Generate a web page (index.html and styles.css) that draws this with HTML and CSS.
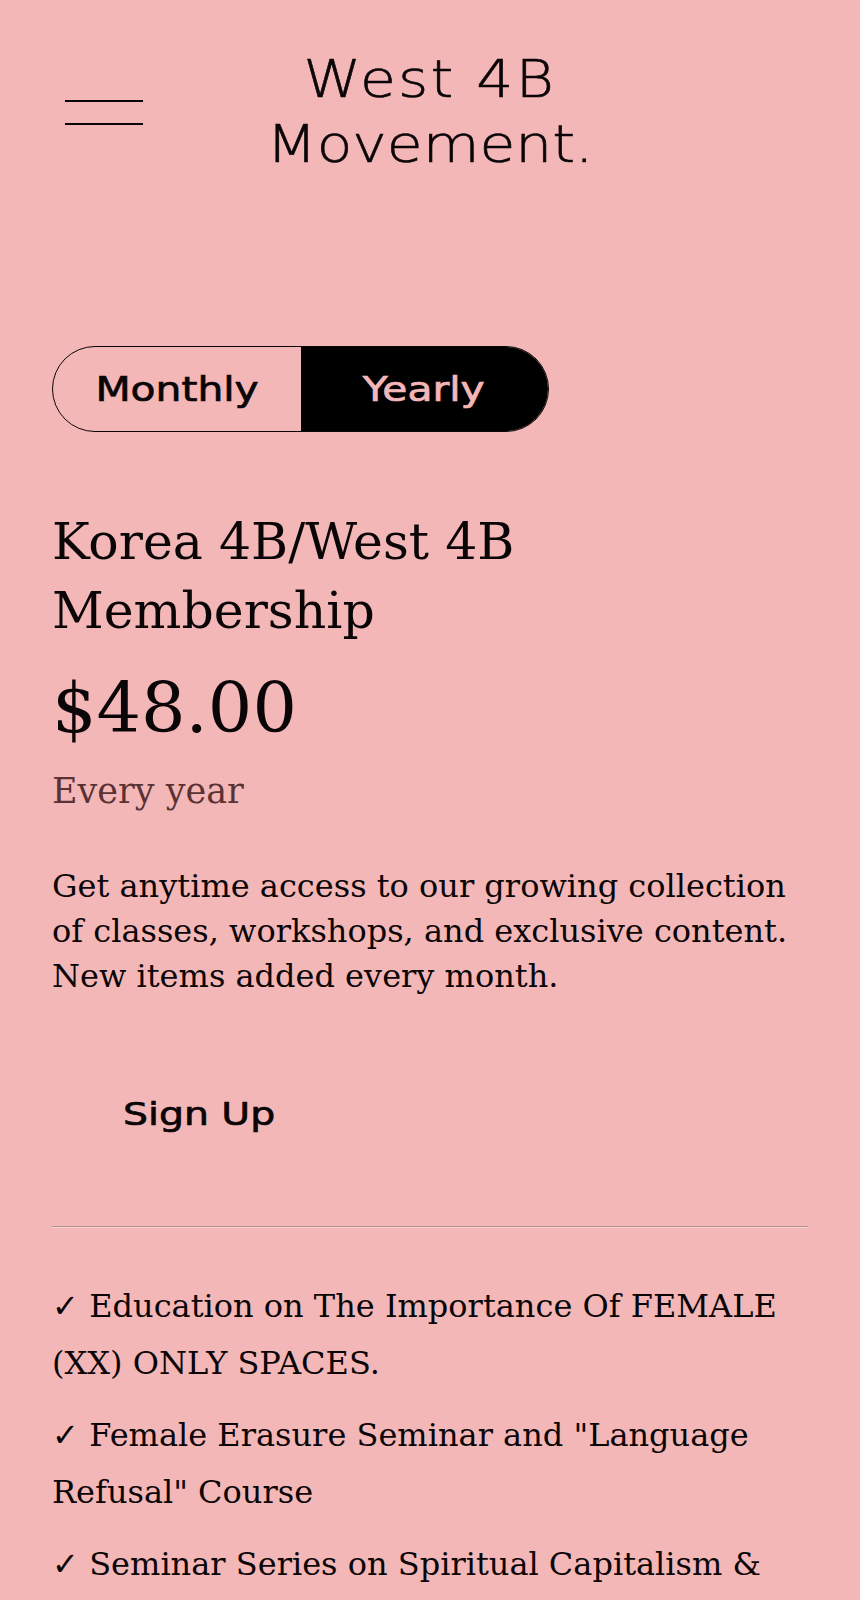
FILE: index.html
```html
<!DOCTYPE html>
<html lang="en">
<head>
<meta charset="utf-8">
<title>West 4B Movement. – Membership</title>
<link rel="stylesheet" href="styles.css">
</head>
<body>
<div class="page">
  <header class="header">
    <button class="menu" aria-label="Open menu">
      <span class="menu-line"></span>
      <span class="menu-line"></span>
    </button>
    <div class="logo"><span class="wide logo-top">West 4B</span><br><span class="wide">Movement.</span></div>
    <div class="header-spacer"></div>
  </header>

  <main class="plan">
    <div class="toggle">
      <span class="toggle-opt"><span class="wide">Monthly</span></span>
      <span class="toggle-opt active"><span class="wide">Yearly</span></span>
    </div>

    <h1 class="plan-title">Korea 4B/West 4B Membership</h1>
    <div class="price">$48.00</div>
    <div class="period">Every year</div>
    <p class="desc">Get anytime access to our growing collection of classes, workshops, and exclusive content. New items added every month.</p>

    <button class="signup"><span class="wide">Sign Up</span></button>

    <hr class="divider">

    <ul class="benefits">
      <li>✓ Education on The Importance Of FEMALE (XX) ONLY SPACES.</li>
      <li>✓ Female Erasure Seminar and "Language Refusal" Course</li>
      <li>✓ Seminar Series on Spiritual Capitalism &amp; Cult Tactics</li>
    </ul>
  </main>
</div>
</body>
</html>
```

FILE: styles.css
```css
html, body {
  margin: 0;
  padding: 0;
  background: #f4b7b8;
}

body {
  color: #0a0506;
  font-family: "DejaVu Serif", serif;
  height: 1600px;
  overflow: hidden;
}

.page {
  padding: 0 52px;
}

.wide {
  display: inline-block;
  transform: scaleX(1.2);
  transform-origin: center;
}

.header {
  display: grid;
  grid-template-columns: 1fr auto 1fr;
  align-items: center;
  padding-top: 47px;
}

.menu {
  justify-self: start;
  display: flex;
  flex-direction: column;
  gap: 21px;
  width: 78px;
  padding: 0;
  margin-left: 13px;
  background: none;
  border: 0;
}

.menu-line {
  display: block;
  height: 2px;
  background: #0a0506;
}

.logo {
  font-family: "DejaVu Sans", sans-serif;
  font-weight: 200;
  font-size: 52px;
  line-height: 65px;
  text-align: center;
  -webkit-text-stroke: 0.6px #0a0506;
}

.logo .wide {
  transform: scaleX(1.12);
}

.logo .logo-top {
  letter-spacing: 2px;
}

.plan {
  padding-top: 169px;
}

.toggle {
  display: flex;
  width: 497px;
  height: 86px;
  box-sizing: border-box;
  border: 1.5px solid #0a0506;
  border-radius: 43px;
  overflow: hidden;
}

.toggle-opt {
  flex: 1;
  display: flex;
  align-items: center;
  justify-content: center;
  font-family: "DejaVu Sans", sans-serif;
  font-size: 34px;
  -webkit-text-stroke: 0.7px #0a0506;
}

.toggle-opt.active {
  background: #000;
  color: #f4b7b8;
  -webkit-text-stroke: 0.7px #f4b7b8;
}

.plan-title {
  margin: 75px 0 0;
  font-weight: normal;
  font-size: 50.5px;
  line-height: 69px;
  width: 520px;
}

.price {
  margin-top: 21px;
  font-size: 70px;
  line-height: 84px;
}

.period {
  margin-top: 21px;
  font-size: 35px;
  line-height: 40px;
  color: #5a3234;
}

.desc {
  margin: 53px 0 0;
  font-size: 32px;
  line-height: 45px;
}

.signup {
  display: block;
  margin-top: 95px;
  padding: 0 0 0 71px;
  background: none;
  border: 0;
  color: #0a0506;
  font-family: "DejaVu Sans", sans-serif;
  font-size: 32px;
  line-height: 40px;
  -webkit-text-stroke: 0.7px #0a0506;
}

.signup .wide {
  transform: scaleX(1.23);
  transform-origin: left center;
}

.divider {
  margin: 92px 0 0;
  height: 1px;
  border: 0;
  background: #b59292;
  box-shadow: 0 1px 0 #f6d6d2;
}

.benefits {
  list-style: none;
  margin: 51px 0 0;
  padding: 0;
  display: flex;
  flex-direction: column;
  gap: 15px;
}

.benefits li {
  font-size: 32px;
  line-height: 57px;
}
```
